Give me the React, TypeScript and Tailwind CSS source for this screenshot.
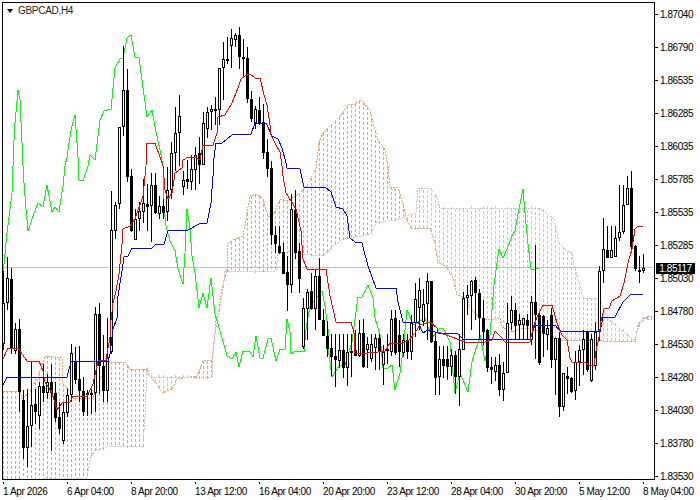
const FONT = "font-['Liberation_Sans',Arial,sans-serif]";

// candles by bar index: [high, low, bodyTop, bodyBottom, filled] in page pixels
const candles: number[][] = [
  [271, 350, 303, 344, 0], [257, 310, 278, 303, 0], [268, 354, 279, 349, 1], [323, 354, 329, 351, 0],
  [319, 412, 329, 392, 1], [390, 459, 400, 448, 1], [389, 467, 426, 448, 0], [362, 447, 405, 426, 0],
  [389, 424, 404, 412, 1], [382, 429, 386, 416, 0], [364, 402, 386, 393, 1], [374, 399, 382, 393, 0],
  [364, 451, 382, 393, 1], [382, 422, 393, 418, 1], [402, 434, 417, 429, 1], [402, 444, 412, 441, 0],
  [389, 417, 395, 413, 0], [344, 402, 353, 395, 0], [347, 384, 362, 380, 1], [346, 402, 379, 391, 1],
  [377, 416, 391, 412, 1], [390, 416, 393, 395, 1], [389, 414, 393, 395, 0], [307, 412, 314, 393, 0],
  [303, 394, 314, 366, 1], [335, 402, 366, 391, 1], [318, 402, 358, 391, 0], [191, 354, 230, 352, 0],
  [202, 239, 205, 231, 0], [127, 209, 127, 204, 0], [46, 136, 90, 127, 0], [69, 182, 90, 177, 1],
  [169, 232, 176, 231, 1], [209, 240, 219, 240, 0], [202, 231, 211, 219, 0], [179, 223, 203, 212, 0],
  [184, 231, 204, 207, 1], [173, 242, 185, 206, 0], [173, 214, 185, 213, 1], [196, 219, 206, 214, 0],
  [199, 219, 206, 213, 1], [167, 221, 190, 212, 0], [142, 199, 153, 190, 0], [107, 171, 133, 153, 0],
  [95, 166, 116, 133, 0], [171, 195, 180, 187, 0], [160, 189, 179, 182, 1], [155, 190, 169, 182, 0],
  [147, 190, 155, 170, 0], [137, 184, 153, 165, 1], [112, 165, 123, 165, 0], [107, 138, 112, 129, 0],
  [105, 130, 109, 112, 0], [97, 125, 109, 111, 1], [68, 125, 68, 110, 0], [42, 100, 59, 68, 0],
  [37, 64, 59, 61, 1], [29, 68, 38, 46, 0], [33, 47, 35, 40, 0], [27, 69, 35, 57, 1],
  [39, 77, 57, 59, 1], [47, 103, 58, 99, 1], [91, 122, 99, 119, 1], [106, 129, 109, 123, 0],
  [97, 125, 110, 123, 1], [104, 159, 122, 153, 1], [139, 177, 152, 169, 1], [161, 245, 168, 235, 1],
  [226, 253, 235, 244, 1], [226, 254, 246, 253, 1], [243, 274, 252, 274, 1], [256, 311, 272, 285, 1],
  [194, 293, 209, 285, 0], [190, 259, 210, 253, 1], [243, 293, 251, 279, 1], [298, 349, 308, 347, 0],
  [289, 340, 292, 309, 0], [273, 310, 291, 309, 1], [269, 330, 276, 309, 0], [258, 320, 276, 320, 1],
  [309, 336, 320, 336, 1], [321, 357, 336, 349, 1], [334, 376, 348, 357, 1], [334, 387, 356, 360, 1],
  [334, 368, 350, 361, 0], [334, 378, 350, 368, 1], [334, 386, 352, 368, 0], [334, 377, 351, 353, 1],
  [330, 355, 350, 356, 1], [320, 357, 333, 356, 0], [319, 368, 333, 367, 1], [337, 368, 344, 350, 0],
  [334, 362, 344, 359, 0], [334, 370, 338, 348, 0], [334, 370, 338, 352, 1], [345, 385, 352, 365, 0],
  [334, 364, 349, 351, 1], [310, 356, 319, 352, 0], [310, 355, 318, 353, 1], [320, 367, 335, 352, 1],
  [334, 357, 340, 353, 0], [334, 359, 340, 352, 1], [315, 360, 323, 352, 0], [283, 337, 299, 323, 0],
  [278, 330, 290, 308, 0], [289, 326, 304, 322, 0], [273, 340, 281, 304, 0], [281, 343, 281, 342, 1],
  [332, 395, 341, 378, 1], [346, 395, 359, 377, 0], [346, 378, 359, 366, 1], [346, 380, 359, 367, 1],
  [349, 376, 355, 367, 0], [351, 394, 355, 377, 1], [334, 406, 349, 377, 0], [292, 350, 298, 350, 0],
  [285, 315, 295, 298, 0], [280, 330, 281, 296, 0], [277, 320, 280, 293, 1], [289, 340, 293, 318, 1],
  [300, 345, 318, 332, 1], [329, 372, 330, 368, 1], [357, 384, 367, 370, 1], [357, 381, 365, 372, 0],
  [354, 396, 365, 390, 1], [362, 401, 373, 390, 0], [303, 373, 323, 373, 0], [296, 330, 310, 323, 0],
  [303, 340, 310, 326, 1], [314, 340, 320, 325, 0], [318, 340, 318, 325, 0], [314, 340, 320, 326, 1],
  [296, 345, 302, 340, 0], [245, 359, 302, 315, 1], [312, 365, 315, 363, 1], [315, 357, 316, 334, 1],
  [320, 350, 328, 335, 0], [308, 368, 315, 360, 1], [338, 395, 338, 360, 0], [332, 417, 338, 407, 1],
  [373, 411, 373, 407, 0], [367, 394, 376, 379, 1], [377, 393, 378, 392, 1], [351, 400, 362, 391, 0],
  [345, 386, 350, 362, 0], [330, 375, 339, 350, 0], [332, 372, 332, 370, 1], [334, 382, 339, 381, 0],
  [322, 370, 332, 366, 0], [266, 341, 271, 332, 0], [218, 283, 249, 271, 0], [226, 258, 250, 258, 1],
  [226, 258, 250, 258, 0], [226, 257, 238, 257, 0], [185, 241, 232, 238, 0], [185, 234, 205, 232, 0],
  [176, 205, 188, 205, 0], [171, 250, 188, 247, 1], [245, 271, 246, 269, 1], [256, 283, 270, 272, 1],
  [254, 273, 268, 271, 0],
];

const green = "3,275 7,233 12,193 13,166 13,157 15,123 18,90 20,100 22,143 23,166 24,183 26,209 28,231 33,216 38,203 43,207 47,185 52,212 55,207 59,212 63,186 65,166 67,157 71,130 75,115 78,157 79,180 83,181 88,166 90,155 95,160 100,120 104,111 111,109 115,68 120,59 123,58 127,38 131,35 135,57 139,58 142,80 147,117 152,110 155,127 160,150 163,166 163,199 166,226 170,241 175,251 178,269 183,284 185,253 187,209 190,229 192,256 195,273 199,308 203,293 207,308 211,278 215,314 220,331 224,345 227,356 232,359 236,352 239,367 243,351 250,352 253,357 256,336 260,358 263,358 268,339 271,338 276,361 280,349 285,349 287,319 290,332 291,354 296,351 304,352 306,329 310,306 322,291 325,306 328,329 328,347 332,377 339,366 345,365 352,342 358,297 362,297 368,285 373,298 375,318 380,335 383,368 388,368 392,365 395,390 400,373 403,350 407,310 413,325 425,318 432,338 440,328 443,328 450,342 455,393 460,373 468,392 472,362 480,335 485,361 490,335 494,285 499,249 503,258 509,244 512,236 515,231 519,209 523,189 525,213 528,244 531,269 535,269 539,268";
const red = "3,359 8,348 18,348 27,361 39,361 43,371 45,382 52,393 57,410 63,402 70,402 73,396 87,396 93,384 98,361 106,360 110,337 110,329 113,303 116,291 119,274 122,244 123,229 130,226 135,219 143,196 146,166 147,143 155,143 160,157 163,166 165,190 168,199 172,193 175,173 182,168 183,160 188,157 195,157 200,160 203,145 213,145 217,133 218,117 225,115 232,103 238,88 241,79 245,76 250,74 255,78 260,78 264,95 267,105 270,125 271,135 275,143 280,152 282,166 283,176 286,193 296,209 301,231 303,259 307,269 326,269 330,296 336,322 351,322 354,333 355,353 368,353 378,352 385,351 390,343 403,343 409,340 415,333 420,325 430,322 437,328 438,332 460,340 465,342 485,342 492,340 495,331 502,338 505,342 530,342 533,328 537,317 543,305 552,305 557,323 562,335 567,340 570,358 572,362 585,362 589,365 594,365 596,351 599,337 601,321 604,309 609,308 612,301 620,296 624,283 628,263 632,249 635,229 638,226 643,226";
const blue = "3,385 7,377 67,377 71,362 74,361 108,361 110,354 113,329 117,318 118,296 122,271 124,257 128,256 132,248 152,248 156,244 164,244 168,231 170,230 188,230 199,224 207,223 211,203 213,176 213,165 216,143 222,143 232,135 251,134 255,123 266,123 272,136 278,139 282,148 286,163 287,168 300,169 304,187 325,187 331,192 336,207 343,209 347,216 350,238 355,242 362,243 368,266 376,288 396,288 398,302 403,322 418,322 423,333 428,330 438,333 457,333 463,339 530,339 535,325 555,325 560,331 600,332 603,317 615,317 623,302 630,295 643,294";

// the two cloud spans, also as x,y
const spanA = "3,391 20,391 22,399 30,392 42,367 45,356 62,358 63,384 70,392 73,398 93,398 107,362 115,362 125,363 130,369 145,369 150,377 157,384 162,393 172,389 177,379 197,376 203,361 212,360 213,351 215,334 215,323 218,316 222,289 227,269 228,244 233,240 243,236 250,196 257,194 263,199 268,216 273,216 280,199 288,201 300,193 308,184 316,168 319,143 323,133 331,125 341,115 348,105 355,104 361,100 370,110 373,123 378,140 385,150 388,166 390,187 398,188 403,204 406,218 411,228 430,228 435,243 438,263 446,266 453,278 457,295 467,298 470,308 480,318 490,320 500,318 502,327 512,332 522,328 528,328 545,333 560,340 568,340 635,342 638,325 643,318 652,316";
const spanB = "3,500 43,478 87,478 90,459 95,450 110,446 143,446 145,417 147,367 150,377 157,377 183,377 197,377 212,377 213,354 215,334 223,289 225,271 276,271 278,254 298,249 301,254 323,256 336,244 343,239 351,238 371,234 376,223 396,220 406,216 416,213 418,189 430,188 436,194 440,208 540,208 554,219 559,243 567,251 572,253 574,266 580,285 583,298 600,298 603,308 607,318 630,337 635,340 639,325 645,318 652,320";

const parse = (s: string) => s.split(' ').map((p) => p.split(',').map(Number));

// y of a polyline at a given x
function yAt(pts: number[][], x: number) {
  for (let i = 1; i < pts.length; i++) {
    if (x <= pts[i][0]) {
      const [x0, y0] = pts[i - 1];
      const [x1, y1] = pts[i];
      return x1 === x0 ? y1 : y0 + ((y1 - y0) * (x - x0)) / (x1 - x0);
    }
  }
  return pts[pts.length - 1][1];
}

const prices = ['1.87040', '1.86790', '1.86535', '1.86285', '1.86035', '1.85785', '1.85535', '1.85285', '1.85030', '1.84780', '1.84530', '1.84280', '1.84030', '1.83780', '1.83530'];
const dates = ['1 Apr 2026', '6 Apr 04:00', '8 Apr 20:00', '13 Apr 12:00', '16 Apr 04:00', '20 Apr 20:00', '23 Apr 12:00', '28 Apr 04:00', '30 Apr 20:00', '5 May 12:00', '8 May 04:00'];

function Cloud() {
  const a = parse(spanA);
  const b = parse(spanB);
  let orange = '';
  let thistle = '';
  for (let x = 3; x <= 652; x += 4) {
    const ya = Math.round(yAt(a, x));
    const yb = Math.round(yAt(b, x));
    // 3px dash, 2px gap, starting at span A so neighbouring columns don't line up
    const step = ya < yb ? 5 : -5;
    let d = '';
    for (let y = ya; step > 0 ? y < yb : y > yb; y += step) {
      d += `M${x} ${step > 0 ? y : y - 3}h1v3h-1z`;
    }
    if (ya < yb) orange += d;
    else thistle += d;
  }
  return (
    <g>
      <path d={orange} fill="#f4a460" />
      <path d={thistle} fill="#d8bfd8" />
    </g>
  );
}

function Candles() {
  return (
    <g>
      {candles.map(([hi, lo, top, bot, filled], i) => {
        const x = 3 + 4 * i;
        return (
          <g key={i}>
            <rect x={x} y={hi} width={1} height={lo - hi} fill="#000" />
            <rect x={x - 1} y={top} width={3} height={Math.max(bot - top, 1)} fill="#000" />
            {!filled && bot - top > 2 && <rect x={x} y={top + 1} width={1} height={bot - top - 2} fill="#fff" />}
          </g>
        );
      })}
    </g>
  );
}

export default function App() {
  return (
    <div className={`w-[700px] h-[500px] overflow-hidden bg-white text-black ${FONT} text-[10px] leading-[11px]`}>
      <div className="flex h-[482px] pl-[2px] pt-[2px]">
        {/* chart */}
        <div className="relative w-[653px] h-[478px] shrink-0 border border-black">
          <svg viewBox="3 3 651 476" width={651} height={476} shapeRendering="crispEdges" className="block">
            <Cloud />
            <polyline points={spanA} fill="none" stroke="#f4a460" strokeDasharray="2 1" />
            <polyline points={spanB.split(' ').slice(1).join(' ')} fill="none" stroke="#d8bfd8" strokeDasharray="2 1" />
            <rect x={3} y={267} width={651} height={1} fill="#c0c0c0" />
            <polyline points={green} fill="none" stroke="#00ff00" />
            <Candles />
            <polyline points={blue} fill="none" stroke="#0000ff" />
            <polyline points={red} fill="none" stroke="#ff0000" />
          </svg>
          <div className="absolute left-[4px] top-[2px] flex items-center gap-[5px]">
            <div className="w-0 h-0 border-x-[3px] border-x-transparent border-t-[4px] border-t-black" />
            <span className="text-[10px] tracking-[-0.3px] text-[#222]">GBPCAD,H4</span>
          </div>
        </div>

        {/* price axis */}
        <div className="relative flex flex-col gap-[22px] pt-[7px] shrink-0">
          {prices.map((p) => (
            <div key={p} className="flex items-center h-[11px] gap-[2px]">
              <div className="w-[3px] h-px bg-black" />
              <span className="tracking-[-0.45px]">{p}</span>
            </div>
          ))}
          <div className="absolute left-[1px] top-[261px] w-[39px] h-[11px] bg-black text-white text-center tracking-[-0.45px]">
            1.85117
          </div>
        </div>
      </div>

      {/* time axis */}
      <div className="flex pl-[3px]">
        {dates.map((d) => (
          <div key={d} className="w-[64px] shrink-0 flex flex-col">
            <div className="w-px h-[2px] bg-black" />
            <span className="mt-[2px] whitespace-nowrap tracking-[-0.4px]">{d}</span>
          </div>
        ))}
      </div>
    </div>
  );
}
